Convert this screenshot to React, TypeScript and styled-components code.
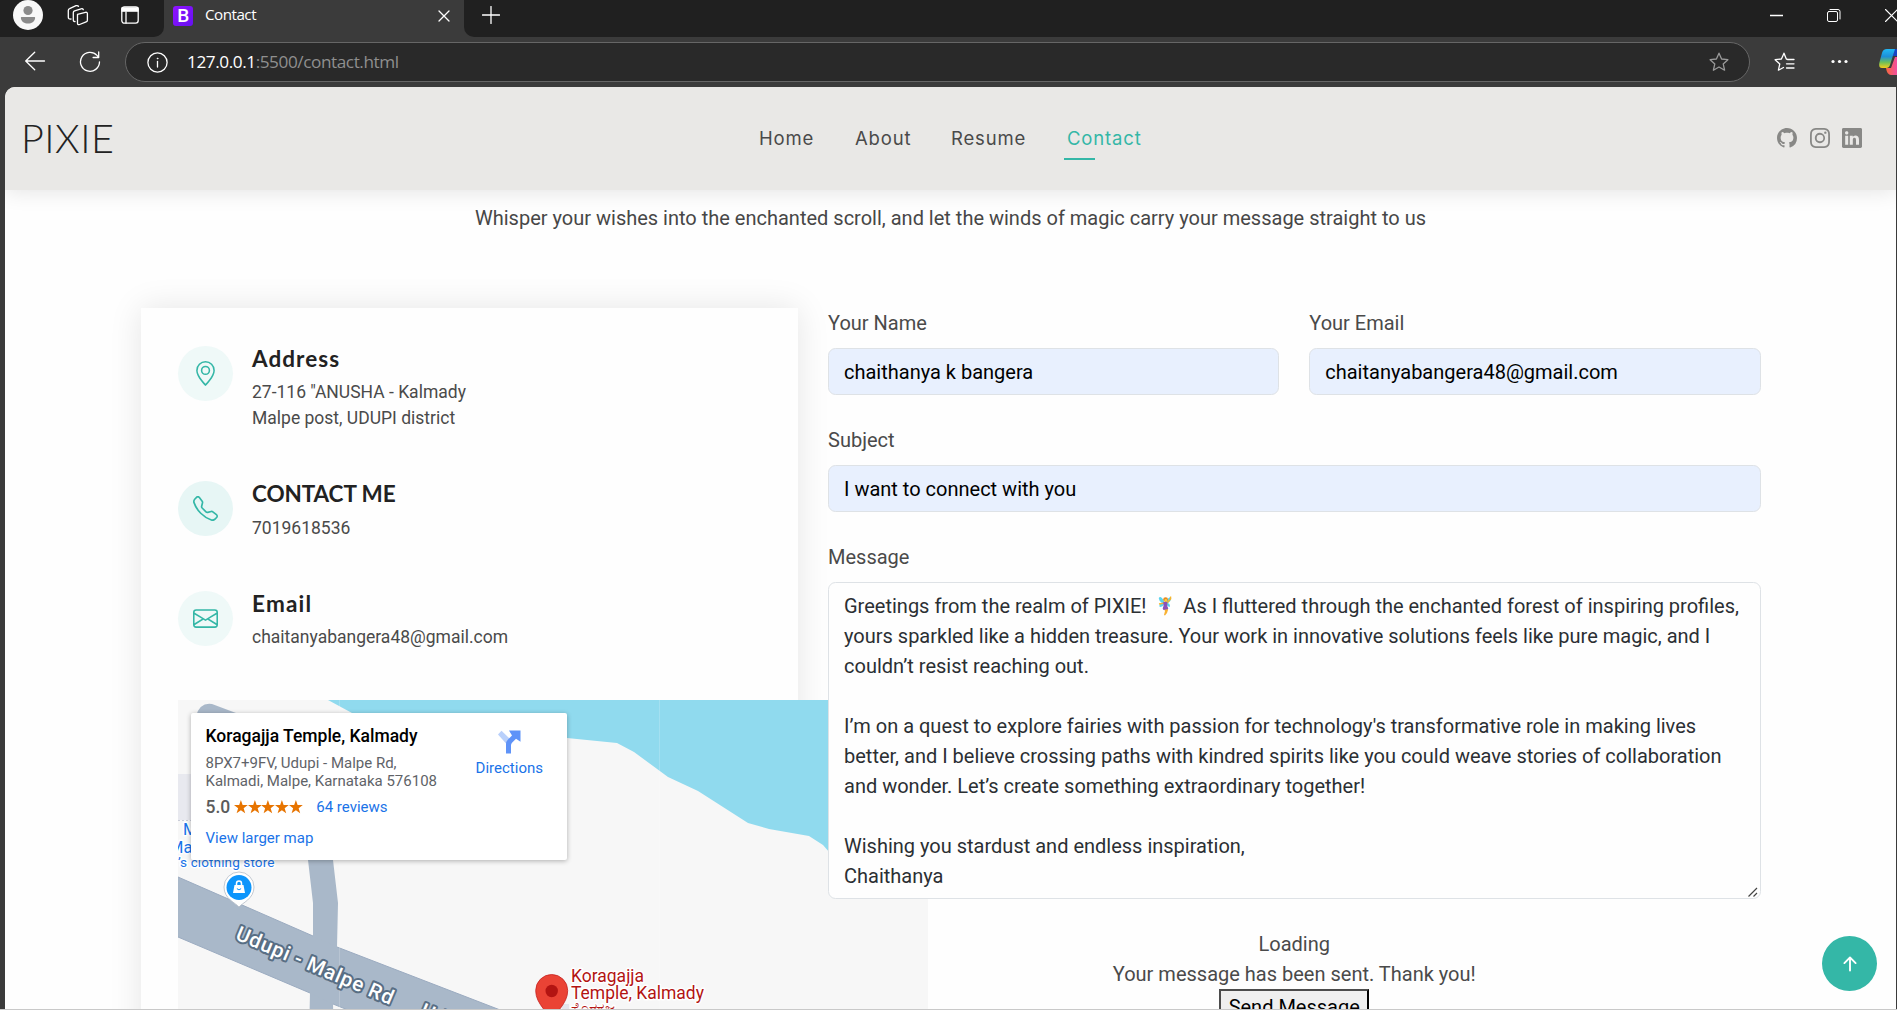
import React from "react";
import styled, { createGlobalStyle } from "styled-components";
import {
  BsArrowUpShort,
  BsEnvelope,
  BsGeoAlt,
  BsGithub,
  BsInstagram,
  BsLinkedin,
  BsTelephone,
} from "react-icons/bs";

const roboto = `Roboto, "Liberation Sans", sans-serif`;
const accent = "#34b7a7";

const GlobalStyle = createGlobalStyle`
  *, *::before, *::after { box-sizing: border-box; }
  body { margin: 0; overflow: hidden; background: #3b3b3b; font-family: ${roboto}; }
  svg { display: block; flex: none; }
`;

const Window = styled.div`
  height: 1010px;
  width: 1897px;
  overflow: hidden;
  display: flex;
  flex-direction: column;
  background: #3b3b3b;
  border-bottom: 1px solid #c9c9c9;
`;

/* ---------- browser chrome ---------- */

const TabStrip = styled.div`
  display: flex;
  flex: none;
  height: 37px;
`;

const StripStart = styled.div`
  width: 164px;
  display: flex;
  padding-left: 13px;
  background: #202020;
  border-bottom-right-radius: 10px;
`;

const StripEnd = styled.div`
  flex: 1;
  display: flex;
  justify-content: space-between;
  padding: 6px 0 0 18px;
  background: #202020;
  border-bottom-left-radius: 10px;
  overflow: hidden;
`;

const WindowButtons = styled.div`
  display: flex;
  gap: 44px;
  padding-top: 3px;
  margin-right: -1px;
`;

const Tab = styled.div`
  width: 300px;
  display: flex;
  align-items: flex-start;
  padding: 6px 14px 0 9px;
  color: #fff;
  font: 15.2px/19px "Open Sans", "Noto Sans", sans-serif;
  letter-spacing: -0.5px;
`;

const Favicon = styled.span`
  width: 20px;
  height: 20px;
  margin-right: 12px;
  border-radius: 3px;
  background: linear-gradient(135deg, #9013fe, #6610f2);
  text-align: center;
  font: 500 19px/20px ${roboto};
`;

const TabTitle = styled.span`
  flex: 1;
  margin-top: -1px;
`;

const TabClose = styled.span`
  padding-top: 4px;
`;

const Toolbar = styled.div`
  display: flex;
  flex: none;
  height: 50px;
  padding: 5px 0 0 25px;
`;

const ToolbarIcon = styled.span<{ $w: number; $top?: number }>`
  width: ${(p) => p.$w}px;
  flex: none;
  padding-top: ${(p) => p.$top ?? 9}px;
`;

const AddressBar = styled.div`
  width: 1625px;
  height: 40px;
  flex: none;
  display: flex;
  align-items: center;
  margin-right: 24px;
  padding: 0 20px 0 21px;
  border: 1px solid #666;
  border-radius: 20px;
  background: #292929;
`;

const Url = styled.span`
  flex: 1;
  margin-left: 19px;
  color: #8f8f8f;
  font: 17.2px/24px "Open Sans", "Noto Sans", sans-serif;
  letter-spacing: -0.43px;
  b {
    color: #fff;
    font-weight: 400;
  }
`;

/* ---------- page ---------- */

const Page = styled.div`
  flex: 1;
  min-height: 0;
  margin: 0 1px 0 5px;
  display: flex;
  flex-direction: column;
  overflow: hidden;
  background: #fefefe;
  border-top-left-radius: 10px;
`;

const Header = styled.header`
  height: 103px;
  flex: none;
  display: grid;
  grid-template-columns: 1fr auto 1fr;
  align-items: center;
  padding: 0 34px 2px 16px;
  background: #e9e8e6;
  box-shadow: 0 0 22px rgba(0, 0, 0, 0.12);
  z-index: 2;
`;

const Logo = styled.div`
  font: 300 39.5px/48px Lato, sans-serif;
  letter-spacing: 0.5px;
  color: #222;
`;

const Nav = styled.nav`
  display: flex;
  gap: 41px;
  padding-left: 18px;
`;

const NavLink = styled.a<{ $active?: boolean; $w: number }>`
  width: ${(p) => p.$w}px;
  position: relative;
  white-space: nowrap;
  color: ${(p) => (p.$active ? accent : "#4a4a4a")};
  font: 18.5px/28px Inter, sans-serif;
  letter-spacing: 0.85px;
  ${(p) =>
    p.$active &&
    `&::after {
      content: "";
      position: absolute;
      left: -3px;
      bottom: -8px;
      width: 31px;
      height: 2px;
      background: ${accent};
    }`}
`;

const Socials = styled.div`
  display: flex;
  justify-content: flex-end;
  gap: 12.5px;
  color: #888886;
`;

const Tagline = styled.p`
  margin: 13px 0 75px;
  text-align: center;
  color: #474747;
  font-size: 20px;
  line-height: 30px;
`;

const Row = styled.main`
  width: 1620px;
  margin: 0 auto;
  display: grid;
  grid-template-columns: 657.5px 932.5px;
  gap: 30px;
`;

const InfoCard = styled.section`
  height: 980px;
  padding: 37.5px;
  background: #fefefe;
  box-shadow: 0 0 31px rgba(0, 0, 0, 0.1);
`;

const InfoItem = styled.div`
  display: flex;
  gap: 19px;
  margin-bottom: 50px;
`;

const InfoIcon = styled.div<{ $hot?: boolean }>`
  width: 55px;
  height: 55px;
  flex: none;
  display: grid;
  place-items: center;
  border-radius: 50%;
  color: ${accent};
  background: ${(p) => (p.$hot ? "#e7f6f5" : "#eff9f8")};
`;

const InfoTitle = styled.h3<{ $spacing?: number }>`
  margin: -1px 0 7.25px;
  color: #222;
  font: 700 22.5px/27px Lato, sans-serif;
  letter-spacing: ${(p) => p.$spacing ?? 0}px;
`;

const InfoText = styled.p`
  margin: 0;
  color: #4a4a4a;
  font-size: 17.5px;
  line-height: 26.25px;
`;

/* ---------- map ---------- */

const MapFrame = styled.div`
  position: relative;
  width: 750px;
  height: 340px;
  overflow: hidden;
  background: #f7f7f7;
`;

const PlaceCard = styled.div`
  position: absolute;
  left: 13px;
  top: 13px;
  width: 376px;
  height: 147px;
  display: flex;
  justify-content: space-between;
  padding: 12px 24px 0 14.5px;
  border-radius: 2px;
  background: #fff;
  box-shadow: 0 1px 5px rgba(0, 0, 0, 0.3);
  font-size: 15px;
`;

const PlaceName = styled.div`
  color: #000;
  font-size: 17.5px;
  line-height: 22px;
  font-weight: 500;
  white-space: nowrap;
`;

const PlaceAddress = styled.div`
  margin-top: 7px;
  color: #5f6368;
  line-height: 18px;
  white-space: nowrap;
`;

const Rating = styled.div`
  display: flex;
  align-items: center;
  height: 20px;
  margin-top: 7px;
  color: #5b5b5b;
  font-size: 17.5px;
  font-weight: 500;
`;

const Stars = styled.span`
  display: flex;
  margin: 0 13.5px 0 3.5px;
`;

const MapLink = styled.a`
  color: #1a73e8;
  font-size: 15px;
  line-height: 18px;
  font-weight: 400;
`;

const LargerMap = styled(MapLink)`
  display: block;
  margin-top: 12px;
`;

const Directions = styled.div`
  display: flex;
  flex-direction: column;
  align-items: center;
  gap: 5px;
  padding-top: 5px;
`;

/* ---------- form ---------- */

const Form = styled.form`
  position: relative;
  display: grid;
  grid-template-columns: 1fr 1fr;
  gap: 30px;
  align-content: start;
  font-size: 20px;
  line-height: 30px;
`;

const Field = styled.label<{ $wide?: boolean }>`
  grid-column: ${(p) => (p.$wide ? "1 / -1" : "auto")};
  display: flex;
  flex-direction: column;
  gap: 10px;
  color: #4a4a4a;
`;

const Input = styled.input`
  width: 100%;
  height: 47px;
  padding: 0 15px;
  border: 1px solid #dee2e6;
  border-radius: 7.5px;
  background: #e8f0fe;
  color: #000;
  font: 20px/30px ${roboto};
`;

const MessageBox = styled.div`
  position: relative;
  height: 317px;
  padding: 8px 15px;
  border: 1px solid #dee2e6;
  border-radius: 7.5px;
  background: #fefefe;
  color: #2b2f33;
  white-space: pre;
`;

const Emoji = styled.svg`
  && {
    display: inline-block;
  }
  vertical-align: -3px;
  margin: 0 6.5px 0 6.500px;
`;

const ResizeGrip = styled.svg`
  position: absolute;
  right: 2px;
  bottom: 1px;
`;

const Status = styled.div`
  grid-column: 1 / -1;
  display: flex;
  flex-direction: column;
  align-items: center;
  color: #4a4a4a;
`;

const SendButton = styled.button`
  width: 150px;
  height: 36px;
  padding: 0;
  border: 2px outset #000;
  border-color: #4c4c4c #000 #000 #4c4c4c;
  background: #efefef;
  color: #000;
  font: 20px/30px ${roboto};
`;

const ScrollTop = styled.button`
  position: fixed;
  left: 1822px;
  top: 936px;
  width: 55px;
  height: 55px;
  display: grid;
  place-items: center;
  padding: 0;
  border: 0;
  border-radius: 50%;
  background: ${accent};
  color: #fff;
`;

const line = { fill: "none", stroke: "#fff", strokeWidth: 1.3, strokeLinecap: "round", strokeLinejoin: "round" } as const;

const starPath = "M10 1.2 12.6 7l6.3.7-4.7 4.2 1.4 6.3L10 15l-5.6 3.2 1.4-6.3L1.1 7.7 7.4 7z";

function Chrome() {
  return (
    <>
      <TabStrip>
        <StripStart>
          <ToolbarIcon $w={54} $top={0}>
            <svg width="30" height="30">
              <circle cx="15" cy="15" r="15" fill="#f8f8f8" />
              <circle cx="15" cy="10.5" r="4.6" fill="#8a8a8a" />
              <path d="M8.5 17h13q.8 0 .6 1.2c-.5 3.600-3.500 5.300-7.100 5.300s-6.600-1.700-7.100-5.300q-.2-1.200.6-1.200z" fill="#8a8a8a" />
            </svg>
          </ToolbarIcon>
          <ToolbarIcon $w={54} $top={4}>
            <svg width="22" height="22" {...line}>
              <path d="M10.500 10.300 18.400 8.300q2-.4 2 1.500v6.400q0 1.200-1.300 1.700l-6.500 2.600q-2.100.7-2.100-1.300v-7.400q0-1.200 0-1.500z" />
              <path d="M8 17.500q-1.700.2-1.700-1.600V8.500q0-1.300 1.300-1.700l6.500-2q1.700-.4 2.200.9" />
              <path d="M4 15q-2.700.3-2.700-1.800V6.500q0-1.400 1.300-1.900L9 1.700q1.600-.5 2.500.5" />
            </svg>
          </ToolbarIcon>
          <ToolbarIcon $w={20} $top={6}>
            <svg width="18" height="18" {...line}>
              <rect x=".8" y=".8" width="16.400" height="16.400" rx="2.600" />
              <path d="M1 1.800h16v3.400H1z" fill="#fff" />
              <path d="M5 6v11" />
            </svg>
          </ToolbarIcon>
        </StripStart>
        <Tab>
          <Favicon>B</Favicon>
          <TabTitle>Contact</TabTitle>
          <TabClose>
            <svg width="12" height="12" {...line}>
              <path d="m1 1 10 10M11 1 1 11" />
            </svg>
          </TabClose>
        </Tab>
        <StripEnd>
          <svg width="18" height="18" {...line}>
            <path d="M9 .5v17M.5 9h17" />
          </svg>
          <WindowButtons>
            <svg width="13" height="13" {...line}>
              <path d="M0 6.500h13" />
            </svg>
            <svg width="14" height="13" {...line} strokeWidth={1}>
              <rect x=".5" y="2.500" width="10" height="10" rx="1.500" />
              <path d="M3 .5h8q2 0 2 2v7.500" />
            </svg>
            <svg width="13" height="13" {...line} strokeWidth={1.1}>
              <path d="m.5.5 12 12M12.500.5l-12 12" />
            </svg>
          </WindowButtons>
        </StripEnd>
      </TabStrip>
      <Toolbar>
        <ToolbarIcon $w={54}>
          <svg width="21" height="20" {...line}>
            <path d="M19.500 10H.700M9.700 1.200.700 10l9 8.800" />
          </svg>
        </ToolbarIcon>
        <ToolbarIcon $w={46}>
          <svg width="22" height="22" {...line}>
            <path d="M20.500 10.800A9.500 9.500 0 1 1 18 4.400l1.500 1.800M19.700.9v5.600h-5.600" />
          </svg>
        </ToolbarIcon>
        <AddressBar>
          <svg width="21" height="21" {...line}>
            <circle cx="10.500" cy="10.500" r="9.600" />
            <path d="M10.500 9.500v5.500" />
            <circle cx="10.500" cy="6.500" r=".5" fill="#fff" strokeWidth=".6" />
          </svg>
          <Url>
            <b>127.0.0.1</b>:5500/contact.html
          </Url>
          <svg width="20" height="20" {...line} stroke="#9a9a9a">
            <path d={starPath} />
          </svg>
        </AddressBar>
        <ToolbarIcon $w={57} $top={10}>
          <svg width="21" height="20" {...line}>
            <path d="M13.500 7.300 12.300 7 10 1.200 7.400 7 1.100 7.700l4.700 4.200-1.400 6.300L9.500 15.500M13.500 7.500H20M12.500 11.800H20M12.500 16H20" />
          </svg>
        </ToolbarIcon>
        <ToolbarIcon $w={48} $top={17}>
          <svg width="17" height="5" fill="#fff">
            <circle cx="2" cy="2.500" r="1.600" />
            <circle cx="8.500" cy="2.500" r="1.600" />
            <circle cx="15" cy="2.500" r="1.600" />
          </svg>
        </ToolbarIcon>
        <ToolbarIcon $w={18} $top={7}>
          <svg width="18" height="26">
            <defs>
              <linearGradient id="cop" x2="0" y2="1">
                <stop offset="0" stopColor="#22b8f5" />
                <stop offset=".4" stopColor="#1d8fd8" />
                <stop offset=".7" stopColor="#6cbf5a" />
                <stop offset="1" stopColor="#f5cf1a" />
              </linearGradient>
              <linearGradient id="cop2" x2="1" y2="0">
                <stop offset="0" stopColor="#f9683a" />
                <stop offset="1" stopColor="#f04fa0" />
              </linearGradient>
            </defs>
            <path d="M15 0h3v7h-4z" fill="#1743c4" />
            <path d="M7 19h5l4-11h2v18h-6q-4 0-5-7z" fill="url(#cop2)" />
            <path d="M8 0h8l-5 16q-1 3-4 3H3q-3.500 0-2.700-5L3 4q1-4 5-4z" fill="url(#cop)" />
          </svg>
        </ToolbarIcon>
      </Toolbar>
    </>
  );
}

const halo = { paintOrder: "stroke", stroke: "#fff", strokeWidth: 3, strokeLinejoin: "round" } as const;

function MapView() {
  return (
    <MapFrame>
      <svg width="750" height="340" fontFamily="Roboto, sans-serif">
        <path d="M0 74h13v46H0z" fill="#e8e9ef" />
        <path d="M0 120.500h13" stroke="#c9ccd8" strokeDasharray="2 2" />
        <path d="M150 0 174 13 270 28 389 38 439 43 456 52 490 77 520 91 570 123 591 129 631 136 645 145 665 168 710 190 750 194V0z" fill="#90daee" />
        <g fill="#a9b8c9">
          <path d="M18 16q4-14 16-12l45 17-30 10z" />
          <path d="M128 120 130 160 135 203V240L132 292 131 340H156L155 304 159 247 160 203 155 160V120z" />
          <path d="M0 177 135 236 159 247 330 313 400 340H245L155 304 132 293 0 237z" />
        </g>
        <g fill="none" stroke="#9babc0">
          <path d="M0 177 135 236M159 247 330 313M0 237 132 293M155 304 245 340" />
        </g>
        <path d="M161.500 0V340M481.500 0V340" stroke="#fff" strokeOpacity=".18" />
        <g fill="#1a73e8" fontSize="16.500" {...halo}>
          <text x="5" y="135">M</text>
          <text x="-9" y="153">Ma</text>
          <text x="0" y="167" fontSize="13.600" textLength="96.500">’s clothing store</text>
        </g>
        <path d="M61 207c-3-4-15-8-15-20a15 15 0 0 1 30 0c0 12-12 16-15 20z" fill="#fff" stroke="#b5bcc6" strokeWidth=".8" />
        <circle cx="61" cy="187.500" r="12.500" fill="#0d95fb" />
        <path d="M56.500 185h9l1.500 8h-12z" fill="#fff" />
        <path d="M58.500 186v-2.500a2.500 2.500 0 0 1 5 0V186" fill="none" stroke="#fff" strokeWidth="1.500" />
        <path d="M59 188.500q2 2.500 4 0" fill="none" stroke="#0d95fb" strokeWidth="1.100" />
        <g fill="#fff" fontSize="20.500" fontWeight="500" paintOrder="stroke" stroke="#586e84" strokeWidth="4" strokeLinejoin="round">
          <text transform="translate(56.500 239) rotate(23)" textLength="169">Udupi - Malpe Rd</text>
          <text transform="translate(241 316) rotate(23)" textLength="169">Udupi - Malpe Rd</text>
        </g>
        <path d="M384 304h7v8h-7z" fill="#e4e5ec" />
        <path d="M373.700 324c-2-12-16-19-16-33.500a16 16 0 0 1 32 0c0 14.500-14 21.500-16 33.500z" fill="#ea4335" stroke="#c5221f" strokeWidth=".8" />
        <circle cx="373.700" cy="291" r="6.200" fill="#b31412" />
        <g fill="#b31412" fontSize="17.500" {...halo}>
          <text x="393" y="281.500" textLength="73">Koragajja</text>
          <text x="393" y="299" textLength="133">Temple, Kalmady</text>
          <text x="393" y="314" fontSize="15.500" textLength="46" lengthAdjust="spacingAndGlyphs">ಕೊರಗಜ್ಜ</text>
        </g>
      </svg>
      <PlaceCard>
        <div>
          <PlaceName>Koragajja Temple, Kalmady</PlaceName>
          <PlaceAddress>
            8PX7+9FV, Udupi - Malpe Rd,
            <br />
            Kalmadi, Malpe, Karnataka 576108
          </PlaceAddress>
          <Rating>
            5.0
            <Stars>
              {[0, 1, 2, 3, 4].map((i) => (
                <svg key={i} width="13.800" height="14" viewBox="0 0 20 20" fill="#e77400">
                  <path d="M10 0l2.500 7.200H20l-6 4.600 2.200 7.400L10 14.800l-6.200 4.400L6 11.800 0 7.200h7.500z" />
                </svg>
              ))}
            </Stars>
            <MapLink>64 reviews</MapLink>
          </Rating>
          <LargerMap>View larger map</LargerMap>
        </div>
        <Directions>
          <svg width="24" height="24">
            <path d="M1 4.500 4.500.8 13 9l-3.500 5z" fill="#b9d0fb" />
            <path d="M9 23.500V14q0-2.500 2-4.500l4-4L12 .5h11.500v11.200L19 8.700l-4 4q-1 1-1 2.500v8.300z" fill="#5f93f8" />
          </svg>
          <MapLink>Directions</MapLink>
        </Directions>
      </PlaceCard>
    </MapFrame>
  );
}

function Fairy() {
  return (
    <Emoji width="14" height="20" viewBox="0 0 14 20">
      <path d="M6 5Q3-.5 1 1.500 0 4 4 7q-4 2-2 4 3 0 4-3zM8.500 5Q11 .5 13 1.500 14 4 10 7q3 2 1.500 4-2 0-3-3z" fill="#5cd3ee" />
      <path d="m1 8 5-.8M9 7l3.600-4V.5" stroke="#f7b52c" strokeWidth="1.300" fill="none" />
      <path d="M5 11h4.500l.5 3-1 3-2 2.500-1-.5 1-4z" fill="#f9b233" />
      <path d="M5.300 6h4v4l1 3-4.800 1-.8-1.500.8-2.500z" fill="#8a52b8" />
      <circle cx="7.600" cy="3.600" r="2.400" fill="#e88a1a" />
      <circle cx="7.800" cy="4.200" r="1.300" fill="#fbc947" />
    </Emoji>
  );
}

export default function App() {
  return (
    <Window>
      <GlobalStyle />
      <Chrome />
      <Page>
        <Header>
          <Logo>PIXIE</Logo>
          <Nav>
            <NavLink $w={55}>Home</NavLink>
            <NavLink $w={55}>About</NavLink>
            <NavLink $w={75}>Resume</NavLink>
            <NavLink $w={75} $active>
              Contact
            </NavLink>
          </Nav>
          <Socials>
            <BsGithub size={20} />
            <BsInstagram size={20} />
            <BsLinkedin size={20} />
          </Socials>
        </Header>
        <Tagline>
          Whisper your wishes into the enchanted scroll, and let the winds of magic carry your message straight to us
        </Tagline>
        <Row>
          <InfoCard>
            <InfoItem>
              <InfoIcon>
                <BsGeoAlt size={25} />
              </InfoIcon>
              <div>
                <InfoTitle $spacing={1.05}>Address</InfoTitle>
                <InfoText>
                  27-116 "ANUSHA - Kalmady
                  <br />
                  Malpe post, UDUPI district
                </InfoText>
              </div>
            </InfoItem>
            <InfoItem>
              <InfoIcon $hot>
                <BsTelephone size={25} />
              </InfoIcon>
              <div>
                <InfoTitle $spacing={-0.1}>CONTACT ME</InfoTitle>
                <InfoText>7019618536</InfoText>
              </div>
            </InfoItem>
            <InfoItem>
              <InfoIcon>
                <BsEnvelope size={25} />
              </InfoIcon>
              <div>
                <InfoTitle $spacing={1.2}>Email</InfoTitle>
                <InfoText>chaitanyabangera48@gmail.com</InfoText>
              </div>
            </InfoItem>
            <MapView />
          </InfoCard>
          <Form>
            <Field>
              Your Name
              <Input defaultValue="chaithanya k bangera" />
            </Field>
            <Field>
              Your Email
              <Input defaultValue="chaitanyabangera48@gmail.com" />
            </Field>
            <Field $wide>
              Subject
              <Input defaultValue="I want to connect with you" />
            </Field>
            <Field $wide>
              Message
              <MessageBox>
                Greetings from the realm of PIXIE! <Fairy /> As I fluttered through the enchanted forest of inspiring profiles,{"\n"}
                yours sparkled like a hidden treasure. Your work in innovative solutions feels like pure magic, and I{"\n"}
                couldn’t resist reaching out.{"\n\n"}
                I’m on a quest to explore fairies with passion for technology's transformative role in making lives{"\n"}
                better, and I believe crossing paths with kindred spirits like you could weave stories of collaboration{"\n"}
                and wonder. Let’s create something extraordinary together!{"\n\n"}
                Wishing you stardust and endless inspiration,{"\n"}
                Chaithanya
                <ResizeGrip width="10" height="10" stroke="#444" strokeWidth="1.200">
                  <path d="M.5 9.500 9 1M5.500 9.500 9 6" />
                </ResizeGrip>
              </MessageBox>
            </Field>
            <Status>
              <div>Loading</div>
              <div>Your message has been sent. Thank you!</div>
              <SendButton type="button">Send Message</SendButton>
            </Status>
          </Form>
        </Row>
      </Page>
      <ScrollTop>
        <BsArrowUpShort size={30} />
      </ScrollTop>
    </Window>
  );
}
